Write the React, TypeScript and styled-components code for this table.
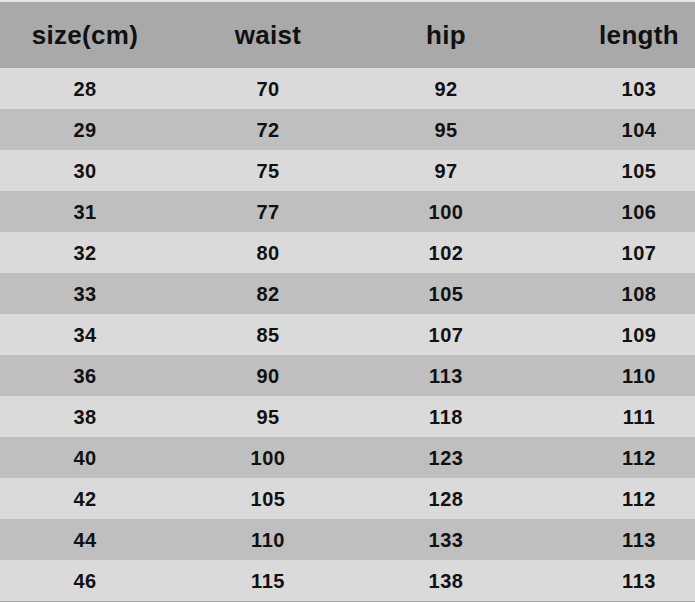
import React from "react";
import styled, { createGlobalStyle } from "styled-components";

const GlobalStyle = createGlobalStyle`
  html, body {
    margin: 0;
    padding: 0;
    background: #ffffff;
  }
  body {
    font-family: "Liberation Sans", Arial, sans-serif;
    color: #111;
  }
`;

const Table = styled.div`
  width: 695px;
  height: 602px;
  display: flex;
  flex-direction: column;
  border-top: 2px solid #e4e4e4;
  border-bottom: 1px solid #a9a9a9;
  box-sizing: border-box;
`;

const Row = styled.div<{ $bg: string; $height: number }>`
  display: grid;
  grid-template-columns: 170px 196px 160px 1fr;
  align-items: center;
  height: ${({ $height }) => $height}px;
  background: ${({ $bg }) => $bg};
`;

const Cell = styled.div<{ $last?: boolean; $head?: boolean }>`
  text-align: center;
  font-weight: 700;
  font-size: ${({ $head }) => ($head ? "26px" : "20px")};
  padding-left: ${({ $last }) => ($last ? "57px" : "0")};
  letter-spacing: ${({ $head }) => ($head ? "0.3px" : "0.5px")};
  line-height: 1;
`;

const headers = ["size(cm)", "waist", "hip", "length"];

const rows = [
  [28, 70, 92, 103],
  [29, 72, 95, 104],
  [30, 75, 97, 105],
  [31, 77, 100, 106],
  [32, 80, 102, 107],
  [33, 82, 105, 108],
  [34, 85, 107, 109],
  [36, 90, 113, 110],
  [38, 95, 118, 111],
  [40, 100, 123, 112],
  [42, 105, 128, 112],
  [44, 110, 133, 113],
  [46, 115, 138, 113]
];

export default function App() {
  return (
    <>
      <GlobalStyle />
      <Table>
        <Row $bg="#a9a9a9" $height={66}>
          {headers.map((h, i) => (
            <Cell key={h} $head $last={i === 3}>
              {h}
            </Cell>
          ))}
        </Row>
        {rows.map((r, idx) => (
          <Row key={r[0]} $bg={idx % 2 === 0 ? "#dadada" : "#bfbfbf"} $height={41}>
            {r.map((v, i) => (
              <Cell key={i} $last={i === 3}>
                {v}
              </Cell>
            ))}
          </Row>
        ))}
      </Table>
    </>
  );
}
